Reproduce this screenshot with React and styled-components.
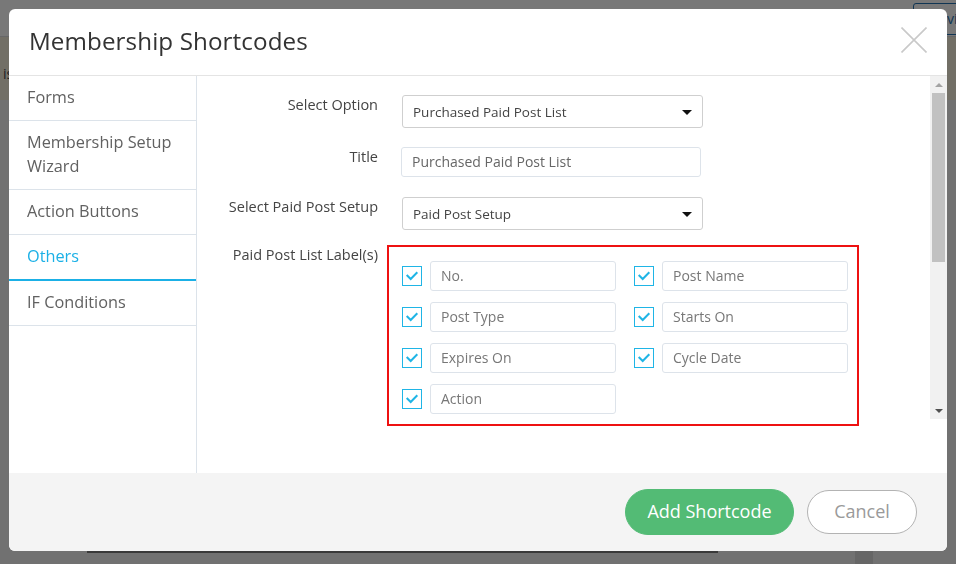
import React from "react";
import styled, { createGlobalStyle } from "styled-components";

const GlobalStyle = createGlobalStyle`
  html, body { margin: 0; padding: 0; }
  body {
    font-family: "Open Sans", "Liberation Sans", sans-serif;
    background: #f1f1f1;
  }
  *, *::before, *::after { box-sizing: border-box; }
`;

/* ---------- page behind the overlay ---------- */
const UnderPage = styled.div`
  height: 564px;
  overflow: hidden;
  background: #f1f1f1;
`;

const TopBar = styled.div`
  height: 37px;
  background: #ffffff;
  border-bottom: 1px solid #dcdcde;
  display: flex;
  justify-content: flex-end;
  padding-top: 3px;
`;

const PreviewButton = styled.span`
  height: 32px;
  width: 84px;
  margin-right: -41px;
  border: 1px solid #2271b1;
  border-radius: 3px;
  color: #2271b1;
  font-size: 14px;
  line-height: 30px;
  padding-left: 11px;
`;

const Notice = styled.div`
  height: 63px;
  background: #f3ecd9;
  font-size: 14px;
  color: #3c434a;
  padding: 27px 0 0 3px;
`;

const BottomRow = styled.div`
  display: flex;
  margin-top: 451px;
`;

const EditorEdge = styled.div`
  margin-left: 87px;
  width: 631px;
  height: 20px;
  border-top: 2px solid #7a7a7a;
`;

const SideColumn = styled.div`
  margin-left: 137px;
  width: 18px;
  height: 20px;
  background: #d8d8d8;
`;

/* ---------- overlay + modal ---------- */
const Overlay = styled.div`
  position: fixed;
  inset: 0;
  background: rgba(0, 0, 0, 0.53);
  padding: 9px;
`;

const Modal = styled.div`
  width: 938px;
  height: 542px;
  background: #fff;
  border-radius: 6px;
  display: flex;
  flex-direction: column;
  overflow: hidden;
`;

const Header = styled.header`
  height: 67px;
  flex: none;
  display: flex;
  align-items: center;
  justify-content: space-between;
  padding: 0 20px 4px 21px;
  border-bottom: 1px solid #e4e4e4;
`;

const Title = styled.h2`
  margin: 0;
  font-size: 24.2px;
  font-weight: 400;
  color: #333;
  letter-spacing: 0.1px;
  margin-left: -1px;
`;

const CloseButton = styled.button`
  width: 26px;
  height: 26px;
  padding: 0;
  border: 0;
  background: none;
  display: flex;
  cursor: pointer;
`;

const Body = styled.div`
  flex: 1;
  display: flex;
  min-height: 0;
`;

const Sidebar = styled.nav`
  width: 188px;
  flex: none;
  border-right: 1px solid #dce3ea;
`;

const NavItem = styled.div`
  padding: 9px 18px 11px;
  font-size: 16.3px;
  line-height: 24px;
  color: ${(p) => (p.$active ? "#1bb0e6" : "#616161")};
  border-bottom: ${(p) => (p.$active ? "2px solid #1bb0e6" : "1px solid #dce3ea")};
`;

const Main = styled.div`
  flex: 1;
  display: flex;
  align-items: flex-start;
`;

const FormArea = styled.div`
  flex: 1;
  padding-top: 19px;
`;

const FieldRow = styled.div`
  display: grid;
  grid-template-columns: 182px 1fr;
  column-gap: 22px;
  align-items: start;
  margin-bottom: ${(p) => p.$gap || 0}px;
`;

const Label = styled.div`
  text-align: right;
  font-size: 14.5px;
  line-height: 20px;
  color: #444;
  padding-right: 1px;
`;

const SelectWrap = styled.div`
  position: relative;
  width: 301px;
  margin-left: 1px;
`;

const Select = styled.select`
  appearance: none;
  width: 100%;
  height: 33px;
  border: 1px solid #cfcfcf;
  border-radius: 3px;
  background: #fff;
  padding: 0 30px 0 10px;
  font-family: inherit;
  font-size: 13.5px;
  color: #444;
  outline: none;
`;

const Caret = styled.svg`
  position: absolute;
  right: 11px;
  top: 15px;
  pointer-events: none;
`;

const TextInput = styled.input`
  width: ${(p) => p.$w || 186}px;
  height: 30px;
  border: 1px solid #dde3ea;
  border-radius: 3px;
  padding: 0 10px 1px;
  font-family: inherit;
  font-size: 14px;
  color: ${(p) => p.$color || "#777"};
  background: #fff;
  outline: none;
`;

const Highlight = styled.div`
  margin-left: -14px;
  width: 472px;
  border: 2px solid #ee1111;
  padding: 14px 9px 10px 13px;
  display: grid;
  grid-template-columns: 214px 214px;
  column-gap: 18px;
  row-gap: 11px;
`;

const LabelItem = styled.div`
  display: flex;
  align-items: center;
  gap: 8px;
`;

const CheckBox = styled.span`
  width: 20px;
  height: 20px;
  flex: none;
  border: 1px solid #1fb5e6;
  background: #fff;
  display: flex;
`;

const ScrollTrack = styled.div`
  width: 17px;
  height: 343px;
  flex: none;
  background: #f1f1f1;
  display: flex;
  flex-direction: column;
  align-items: center;
`;

const ScrollArrow = styled.div`
  height: 17px;
  width: 17px;
  display: flex;
  align-items: center;
  justify-content: center;
`;

const ScrollThumb = styled.div`
  width: 13px;
  height: 169px;
  background: #c1c1c1;
`;

const TrackSpace = styled.div`
  flex: 1;
`;

const Footer = styled.footer`
  height: 78px;
  flex: none;
  background: #f4f4f4;
  display: flex;
  align-items: center;
  justify-content: flex-end;
  gap: 13px;
  padding-right: 30px;
`;

const PillButton = styled.button`
  height: ${(p) => (p.$primary ? 46 : 44)}px;
  width: ${(p) => (p.$primary ? 169 : 110)}px;
  border-radius: 23px;
  border: 1px solid ${(p) => (p.$primary ? "#53bb75" : "#b3b3b3")};
  background: ${(p) => (p.$primary ? "#53bb75" : "#fff")};
  color: ${(p) => (p.$primary ? "#fff" : "#9a9a9a")};
  font-family: inherit;
  font-size: 18px;
  padding: 0 0 2px;
  cursor: pointer;
`;

const navItems = [
  "Forms",
  "Membership Setup Wizard",
  "Action Buttons",
  "Others",
  "IF Conditions",
];

const labels = [
  "No.",
  "Post Name",
  "Post Type",
  "Starts On",
  "Expires On",
  "Cycle Date",
  "Action",
];

function Check() {
  return (
    <CheckBox>
      <svg width="18" height="18" viewBox="0 0 18 18">
        <polyline
          points="3.7,8 7.7,12 14.3,5.3"
          fill="none"
          stroke="#1fb5e6"
          strokeWidth="2"
        />
      </svg>
    </CheckBox>
  );
}

function CaretIcon() {
  return (
    <Caret width="10" height="5" viewBox="0 0 10 5">
      <polygon points="0,0 10,0 5,5" fill="#111" />
    </Caret>
  );
}

export default function App() {
  return (
    <>
      <GlobalStyle />
      <UnderPage>
        <TopBar>
          <PreviewButton>Preview</PreviewButton>
        </TopBar>
        <Notice>is</Notice>
        <BottomRow>
          <EditorEdge />
          <SideColumn />
        </BottomRow>
      </UnderPage>
      <Overlay>
        <Modal>
          <Header>
            <Title>Membership Shortcodes</Title>
            <CloseButton aria-label="Close">
              <svg width="26" height="26" viewBox="0 0 26 26">
                <path
                  d="M0.5 0.5 L25.5 25.5 M25.5 0.5 L0.5 25.5"
                  stroke="#c9c9c9"
                  strokeWidth="1.6"
                  fill="none"
                />
              </svg>
            </CloseButton>
          </Header>
          <Body>
            <Sidebar>
              {navItems.map((n) => (
                <NavItem key={n} $active={n === "Others"}>
                  {n}
                </NavItem>
              ))}
            </Sidebar>
            <Main>
              <FormArea>
                <FieldRow $gap={19}>
                  <Label>Select Option</Label>
                  <SelectWrap>
                    <Select defaultValue="a">
                      <option value="a">Purchased Paid Post List</option>
                    </Select>
                    <CaretIcon />
                  </SelectWrap>
                </FieldRow>
                <FieldRow $gap={20}>
                  <Label>Title</Label>
                  <TextInput
                    $w={300}
                    $color="#666"
                    defaultValue="Purchased Paid Post List"
                  />
                </FieldRow>
                <FieldRow $gap={15}>
                  <Label>Select Paid Post Setup</Label>
                  <SelectWrap>
                    <Select defaultValue="a">
                      <option value="a">Paid Post Setup</option>
                    </Select>
                    <CaretIcon />
                  </SelectWrap>
                </FieldRow>
                <FieldRow>
                  <Label>Paid Post List Label(s)</Label>
                  <Highlight>
                    {labels.map((l) => (
                      <LabelItem key={l}>
                        <Check />
                        <TextInput defaultValue={l} />
                      </LabelItem>
                    ))}
                  </Highlight>
                </FieldRow>
              </FormArea>
              <ScrollTrack>
                <ScrollArrow>
                  <svg width="8" height="4" viewBox="0 0 8 4">
                    <polygon points="0,4 8,4 4,0" fill="#a3a3a3" />
                  </svg>
                </ScrollArrow>
                <ScrollThumb />
                <TrackSpace />
                <ScrollArrow>
                  <svg width="8" height="4" viewBox="0 0 8 4">
                    <polygon points="0,0 8,0 4,4" fill="#505050" />
                  </svg>
                </ScrollArrow>
              </ScrollTrack>
            </Main>
          </Body>
          <Footer>
            <PillButton $primary>Add Shortcode</PillButton>
            <PillButton>Cancel</PillButton>
          </Footer>
        </Modal>
      </Overlay>
    </>
  );
}
